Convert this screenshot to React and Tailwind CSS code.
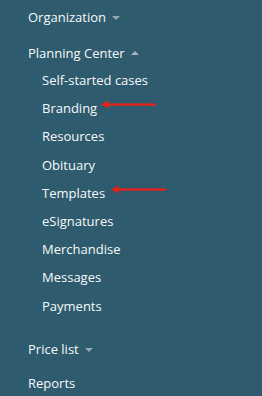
import React from 'react';

const Caret = ({ up }) => (
  <span
    className={
      up
        ? 'ml-[6px] -mt-[3px] inline-block h-0 w-0 border-x-[4px] border-b-[4px] border-x-transparent border-b-[#a3b5bd] align-middle'
        : 'ml-[6px] -mt-[1px] inline-block h-0 w-0 border-x-[4px] border-t-[4px] border-x-transparent border-t-[#94a8b1] align-middle'
    }
  />
);

const Arrow = ({ width }) => (
  <svg width={width} height="9" viewBox={`0 0 ${width} 9`} className="inline-block">
    <polygon points="0,4.5 7.5,0.5 7.5,8.5" fill="#e8201a" />
    <rect x="6" y="3.4" width={width - 6} height="2.3" fill="#e8201a" />
  </svg>
);

const subItems = [
  { label: 'Self-started cases' },
  { label: 'Branding', arrow: 55, shift: '-mt-[8px] ml-[4px]' },
  { label: 'Resources' },
  { label: 'Obituary' },
  { label: 'Templates', arrow: 55, shift: '-mt-[6px] ml-[6px]' },
  { label: 'eSignatures' },
  { label: 'Merchandise' },
  { label: 'Messages' },
  { label: 'Payments' },
];

export default function App() {
  return (
    <div
      className="h-[396px] w-[262px] bg-[#2e5b6e] pl-[28px] pt-[7px] text-[13px] font-medium leading-[20px] text-[#f7f9fa]"
      style={{ fontFamily: '"Open Sans", "Liberation Sans", sans-serif' }}
    >
      <div className="h-5 whitespace-nowrap">
        Organization
        <Caret />
      </div>
      <div className="mt-4 h-5 whitespace-nowrap">
        Planning Center
        <Caret up />
      </div>
      <div className="mt-[7px] flex flex-col gap-[8.2px] pl-[14px]">
        {subItems.map((item) => (
          <div key={item.label} className="flex h-5 items-center whitespace-nowrap">
            <span>{item.label}</span>
            {item.arrow && (
              <span className={`flex ${item.shift}`}>
                <Arrow width={item.arrow} />
              </span>
            )}
          </div>
        ))}
      </div>
      <div className="mt-[23px] h-5 whitespace-nowrap">
        Price list
        <Caret />
      </div>
      <div className="mt-[14px] h-5 whitespace-nowrap">Reports</div>
    </div>
  );
}
